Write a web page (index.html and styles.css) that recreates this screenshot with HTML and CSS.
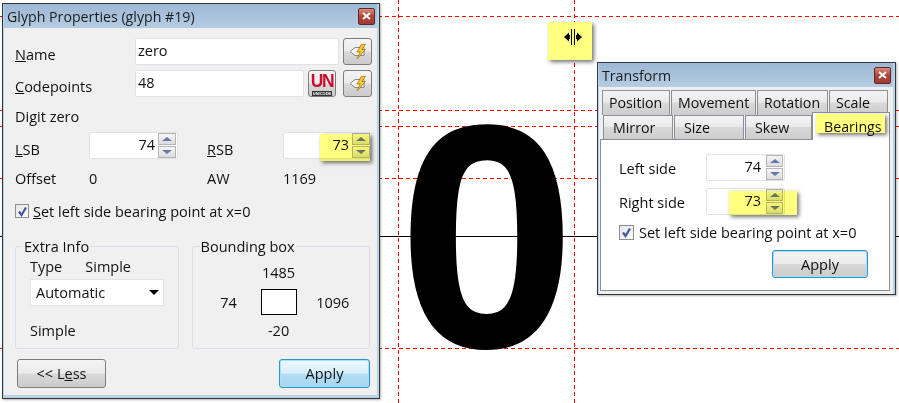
FILE: index.html
```html
<!DOCTYPE html>
<html lang="en">
<head>
    <meta charset="UTF-8">
    <title>Glyph Properties</title>
    <link rel="stylesheet" href="styles.css">
</head>
<body>
<div class="canvas">
    <svg class="guides" width="899" height="403">
        <line x1="0" y1="236.5" x2="899" y2="236.5" stroke="#000"/>
        <g stroke="#f00" stroke-dasharray="4 3">
            <line x1="0" y1="16.5" x2="899" y2="16.5"/>
            <line x1="0" y1="110.5" x2="899" y2="110.5"/>
            <line x1="0" y1="126.5" x2="899" y2="126.5"/>
            <line x1="0" y1="178.5" x2="899" y2="178.5"/>
            <line x1="0" y1="348.5" x2="899" y2="348.5"/>
            <line x1="398.5" y1="0" x2="398.5" y2="403"/>
            <line x1="574.5" y1="0" x2="574.5" y2="403"/>
        </g>
    </svg>
    <div class="big-glyph">0</div>

    <div class="window glyph-window">
        <div class="titlebar">
            <span>Glyph Properties (glyph #19)</span>
            <div class="close"><svg width="9" height="8" viewBox="0 0 9 8"><path d="M1 1l7 6M8 1L1 7" stroke="#fff" stroke-width="2"/></svg></div>
        </div>
        <div class="body">
            <div class="row name-row">
                <label class="lbl"><u>N</u>ame</label>
                <input class="text" value="zero" readonly>
                <div class="btn icon-btn">
                    <svg width="18" height="15" viewBox="0 0 18 15"><path d="M1 7.500l5-4h9v8H6z" fill="#f4f4f4" stroke="#858a92"/><path d="M12.500 0L8 8h3l-3 7 8.500-9.500h-3.500L16.500 0z" fill="#f7c82a" stroke="#9a6c10" stroke-width=".7"/></svg>
                </div>
            </div>
            <div class="row code-row">
                <label class="lbl"><u>C</u>odepoints</label>
                <input class="text" value="48" readonly>
                <div class="btn uni-btn">
                    <span class="uni-big">UN</span>
                    <span class="uni-small">UNICODE</span>
                </div>
                <div class="btn icon-btn">
                    <svg width="18" height="15" viewBox="0 0 18 15"><path d="M1 7.500l5-4h9v8H6z" fill="#f4f4f4" stroke="#858a92"/><path d="M12.500 0L8 8h3l-3 7 8.500-9.500h-3.500L16.500 0z" fill="#f7c82a" stroke="#9a6c10" stroke-width=".7"/></svg>
                </div>
            </div>
            <div class="line digit">Digit zero</div>
            <div class="bearing-row">
                <label class="lbl lsb"><u>L</u>SB</label>
                <div class="spin">
                    <span class="val">74</span>
                    <div class="arrows"><div class="up"></div><div class="down"></div></div>
                </div>
                <label class="lbl rsb"><u>R</u>SB</label>
                <div class="spin">
                    <span class="val">73</span>
                    <div class="arrows"><div class="up"></div><div class="down"></div></div>
                </div>
            </div>
            <div class="bearing-row offset-row">
                <span>Offset</span><span>0</span><span>AW</span><span>1169</span>
            </div>
            <div class="check-row">
                <div class="check"><svg width="11" height="11" viewBox="0 0 11 11"><path d="M2 5.500l2.500 3.500L9 1.500" fill="none" stroke="#3d5a9e" stroke-width="2.200"/></svg></div>
                <span><u>S</u>et left side bearing point at x=0</span>
            </div>
            <div class="groups">
                <fieldset class="group extra">
                    <legend>Extra Info</legend>
                    <div class="type-row"><span>Type</span><span>Simple</span></div>
                    <div class="combo"><span>Automatic</span><i class="caret"></i></div>
                    <div class="simple">Simple</div>
                </fieldset>
                <fieldset class="group bbox">
                    <legend>Bounding box</legend>
                    <div class="bbox-grid">
                        <span class="b-top">1485</span>
                        <span class="b-left">74</span>
                        <div class="b-box"></div>
                        <span class="b-right">1096</span>
                        <span class="b-bottom">-20</span>
                    </div>
                </fieldset>
            </div>
            <div class="actions">
                <div class="btn less">&lt;&lt; L<u>e</u>ss</div>
                <div class="btn apply">Apply</div>
            </div>
        </div>
    </div>

    <div class="window transform-window">
        <div class="titlebar">
            <span>Transform</span>
            <div class="close"><svg width="9" height="8" viewBox="0 0 9 8"><path d="M1 1l7 6M8 1L1 7" stroke="#fff" stroke-width="2"/></svg></div>
        </div>
        <div class="body">
            <div class="tabs tabs-one">
                <div class="tab w68">Position</div>
                <div class="tab w85">Movement</div>
                <div class="tab w70">Rotation</div>
                <div class="tab w59">Scale</div>
            </div>
            <div class="tabs tabs-two">
                <div class="tab w69">Mirror</div>
                <div class="tab w69">Size</div>
                <div class="tab w66">Skew</div>
                <div class="tab selected">Bearings</div>
            </div>
            <div class="pane">
                <div class="side-row">
                    <span>Left side</span>
                    <div class="spin">
                        <span class="val">74</span>
                        <div class="arrows"><div class="up"></div><div class="down"></div></div>
                    </div>
                </div>
                <div class="side-row">
                    <span>Right side</span>
                    <div class="spin">
                        <span class="val">73</span>
                        <div class="arrows"><div class="up"></div><div class="down"></div></div>
                    </div>
                </div>
                <div class="check-row">
                    <div class="check"><svg width="11" height="11" viewBox="0 0 11 11"><path d="M2 5.500l2.500 3.500L9 1.500" fill="none" stroke="#3d5a9e" stroke-width="2.200"/></svg></div>
                    <span>Set left side bearing point at x=0</span>
                </div>
                <div class="pane-actions"><div class="btn apply">Apply</div></div>
            </div>
        </div>
    </div>

    <div class="mark mark-rsb"></div>
    <div class="mark mark-tab"></div>
    <div class="mark mark-spin"></div>
    <div class="mark mark-cursor">
        <svg width="18" height="16" viewBox="0 0 18 16"><path d="M7.500 0v16M10.500 0v16" stroke="#000"/><path d="M0 8l5-4.500V6h1v4H5v2.500zM18 8l-5-4.500V6h-1v4h1v2.500z" fill="#000"/></svg>
    </div>
</div>
</body>
</html>
```

FILE: styles.css
```css
* {
    box-sizing: border-box;
}

body {
    margin: 0;
    background: white;
    font-family: 'Open Sans', sans-serif;
    font-size: 14.5px;
    color: #111;
}

.canvas {
    position: relative;
    width: 899px;
    height: 403px;
    overflow: hidden;
}

.guides {
    position: absolute;
    left: 0;
    top: 0;
}

.big-glyph {
    position: absolute;
    left: 399px;
    top: 72px;
    font-family: 'Liberation Sans', sans-serif;
    font-weight: bold;
    font-size: 316px;
    line-height: 330px;
    color: black;
    -webkit-text-stroke: 2px black;
}

/* windows */
.window {
    position: absolute;
    display: flex;
    flex-direction: column;
    border: 1px solid #34383c;
    background: #b9d3e6;
    padding: 0 2px 3px 1px;
    box-shadow: 1px 1px 2px rgba(0, 0, 0, 0.3);
}

.glyph-window {
    left: 2px;
    top: 3px;
    width: 378px;
    height: 396px;
}

.transform-window {
    left: 597px;
    top: 62px;
    width: 299px;
    height: 233px;
}

.titlebar {
    display: flex;
    align-items: center;
    justify-content: space-between;
    height: 24px;
    padding: 0 2px 0 3px;
    background: linear-gradient(to bottom, #9db8d6, #b5cde2);
    font-size: 14.2px;
    color: #1c1c1c;
    flex: none;
}

.close {
    display: flex;
    align-items: center;
    justify-content: center;
    width: 17px;
    height: 17px;
    border: 1px solid #5a2a24;
    border-radius: 2px;
    background: linear-gradient(to bottom, #d98a7e, #b0443a 50%, #a03c32);
}

.body {
    flex: 1;
    background: #f0f0f0;
    padding: 10px 7px 0 11px;
}

/* common controls */
.lbl {
    display: block;
}

.row {
    display: flex;
    align-items: center;
    height: 27px;
}

.row .lbl {
    flex: none;
    width: 120px;
    padding-top: 6px;
}

.text {
    height: 27px;
    border: 1px solid #dfe3e8;
    border-radius: 2px;
    background: white;
    padding: 0 2px 2px 2px;
    font: inherit;
    color: inherit;
    outline: none;
    flex: none;
}

.name-row .text {
    width: 204px;
}

.code-row {
    margin-top: 5px;
}

.code-row .text {
    width: 169px;
}

.btn {
    display: flex;
    align-items: center;
    justify-content: center;
    border: 1px solid #7d7d7d;
    border-radius: 3px;
    background: linear-gradient(to bottom, #f4f4f4, #ebebeb 48%, #d8d8d8 52%, #cbcbcb);
}

.icon-btn {
    flex: none;
    width: 29px;
    height: 27px;
    margin-left: 4px;
}

.uni-btn {
    flex: none;
    flex-direction: column;
    width: 28px;
    height: 27px;
    margin-left: 4px;
    margin-right: 3px;
    font-family: 'Liberation Sans', sans-serif;
    font-weight: bold;
}

.code-row .icon-btn {
    margin-left: 4px;
}

.uni-big {
    font-size: 17.5px;
    line-height: 20px;
    letter-spacing: -1.5px;
    color: #c8102e;
}

.uni-small {
    width: 20px;
    font-size: 4px;
    line-height: 5px;
    text-align: center;
    background: #333;
    color: #fff;
}

.digit {
    margin-top: 10px;
    height: 20px;
    line-height: 20px;
}

.bearing-row {
    display: grid;
    grid-template-columns: 74px 118px 76px 89px;
    align-items: center;
    margin-top: 4px;
    height: 27px;
}

.bearing-row .lbl {
    padding-top: 9px;
}

.offset-row {
    margin-top: 9px;
    height: 22px;
}

.spin {
    display: flex;
    align-items: center;
    justify-content: flex-end;
    height: 27px;
    width: 89px;
    border: 1px solid #dfe3e8;
    border-radius: 2px;
    background: white;
    padding-right: 1px;
}

.val {
    margin-right: 3px;
    padding-bottom: 1px;
}

.arrows {
    display: flex;
    flex-direction: column;
    gap: 1px;
    width: 18px;
}

.up,
.down {
    position: relative;
    height: 12px;
    border: 1px solid #b5b5b5;
    background: linear-gradient(to bottom, #f6f6f6, #dcdcdc);
}

.up::after,
.down::after {
    content: "";
    position: absolute;
    left: 3px;
    top: 3px;
    border-left: 5px solid transparent;
    border-right: 5px solid transparent;
}

.up::after {
    border-bottom: 4px solid #6677aa;
}

.down::after {
    border-top: 4px solid #6677aa;
}

.check-row {
    display: flex;
    align-items: center;
    gap: 4px;
    margin-top: 12px;
    height: 20px;
}

.check {
    display: flex;
    align-items: center;
    justify-content: center;
    width: 14px;
    height: 14px;
    border: 1px solid #8e8f8f;
    background: linear-gradient(135deg, #e6e6e6, #fafafa);
}

/* group boxes */
.groups {
    display: flex;
    gap: 13px;
    margin-top: 16px;
    height: 112px;
}

.group {
    margin: 0;
    padding: 0 14px 0 14px;
    min-width: 0;
    border: 1px solid #d8dfe6;
    border-radius: 3px;
}

.group legend {
    padding: 0 1px;
    margin-left: -7px;
    line-height: 19px;
}

.extra {
    width: 164px;
}

.bbox {
    width: 179px;
    padding: 0;
}

.bbox legend {
    margin-left: 7px;
}

.type-row {
    display: flex;
    gap: 23px;
    line-height: 20px;
    margin-top: 1px;
}

.combo {
    display: flex;
    align-items: center;
    justify-content: space-between;
    height: 27px;
    width: 134px;
    margin-top: 2px;
    padding: 0 5px;
    background: white;
    border: 1px solid #e4e4e4;
}

.caret {
    border-left: 5px solid transparent;
    border-right: 5px solid transparent;
    border-top: 5px solid black;
    margin-right: -1px;
}

.simple {
    margin-top: 15px;
    line-height: 20px;
}

.bbox-grid {
    display: grid;
    grid-template-columns: 68px 36px 1fr;
    grid-template-rows: 20px 26px 17px;
    row-gap: 7px;
    justify-items: center;
    align-items: center;
    margin-top: 6px;
}

.b-top,
.b-bottom {
    grid-column: 2;
}

.b-top {
    grid-row: 1;
}

.b-left {
    grid-row: 2;
    grid-column: 1;
    padding-left: 4px;
}

.b-box {
    grid-row: 2;
    grid-column: 2;
    width: 36px;
    height: 26px;
    background: white;
    border: 1px solid black;
}

.b-right {
    grid-row: 2;
    grid-column: 3;
}

.b-bottom {
    grid-row: 3;
}

.actions {
    display: flex;
    justify-content: space-between;
    margin-top: 10px;
    padding-left: 2px;
}

.less {
    width: 89px;
    height: 29px;
}

.apply {
    width: 91px;
    height: 29px;
    border: 1px solid #2f93c8;
    background: linear-gradient(to bottom, #ecf7fd, #d9effa 48%, #b4dff3 52%, #a5d6ef);
    box-shadow: inset 0 0 0 1px #a6e2f7;
}

/* tabs */
.transform-window .body {
    padding: 3px 3px 3px 1px;
    background: #f0f0f0;
}

.tabs {
    display: flex;
    font-size: 14.2px;
}

.tabs-one {
    padding-left: 2px;
    gap: 1px;
    height: 25px;
}

.tabs-two {
    padding-left: 3px;
    gap: 1px;
    height: 24px;
    position: relative;
}

.tab {
    display: flex;
    align-items: center;
    height: 100%;
    border: 1px solid #8b8f98;
    border-bottom: none;
    background: linear-gradient(to bottom, #f3f3f3, #ebebeb 45%, #d9d9d9 50%, #cdcdcd);
    padding: 0 0 2px 6px;
}

.tabs-two .tab {
    padding-left: 9px;
    padding-bottom: 1px;
}

.w59 { width: 59px; }
.w66 { width: 67px; }
.w68 { width: 68px; }
.w69 { width: 70px; }
.w70 { width: 71px; }
.w85 { width: 85px; }

.tabs-two .tab.selected {
    flex: 1;
    margin-top: -3px;
    height: 28px;
    margin-bottom: -1px;
    background: white;
    position: relative;
    margin-left: -1px;
    padding-left: 11px;
}

.pane {
    height: 152px;
    background: white;
    border: 1px solid #8b8f98;
    padding: 13px 0 0 18px;
}

.side-row {
    display: flex;
    align-items: center;
    height: 28px;
    margin-bottom: 6px;
}

.side-row > span {
    width: 87px;
    padding-top: 3px;
}

.side-row .spin {
    width: 79px;
}

.pane .val {
    margin-right: 5px;
}

.pane .arrows {
    width: 17px;
}

.pane .check-row {
    margin-top: 7px;
    gap: 5px;
}

.pane .check {
    width: 15px;
    height: 15px;
}

.pane-actions {
    display: flex;
    justify-content: flex-end;
    margin: 8px 21px 0 0;
}

.pane-actions .apply {
    width: 96px;
    height: 28px;
    background: linear-gradient(to bottom, #f4f4f4, #ebebeb 48%, #d8d8d8 52%, #cbcbcb);
}

/* yellow highlights over the screenshot */
.mark {
    position: absolute;
    background: #ffff80;
    mix-blend-mode: multiply;
    box-shadow: 2px 2px 4px rgba(0, 0, 0, 0.55);
}

.mark-rsb {
    left: 320px;
    top: 134px;
    width: 50px;
    height: 27px;
}

.mark-tab {
    left: 816px;
    top: 114px;
    width: 69px;
    height: 19px;
}

.mark-spin {
    left: 729px;
    top: 191px;
    width: 68px;
    height: 24px;
}

.mark-cursor {
    display: flex;
    align-items: center;
    justify-content: center;
    left: 548px;
    top: 22px;
    width: 44px;
    height: 38px;
    padding: 0 0 9px 5px;
    mix-blend-mode: normal;
    box-shadow: 2px 2px 4px rgba(0, 0, 0, 0.55);
}
```
